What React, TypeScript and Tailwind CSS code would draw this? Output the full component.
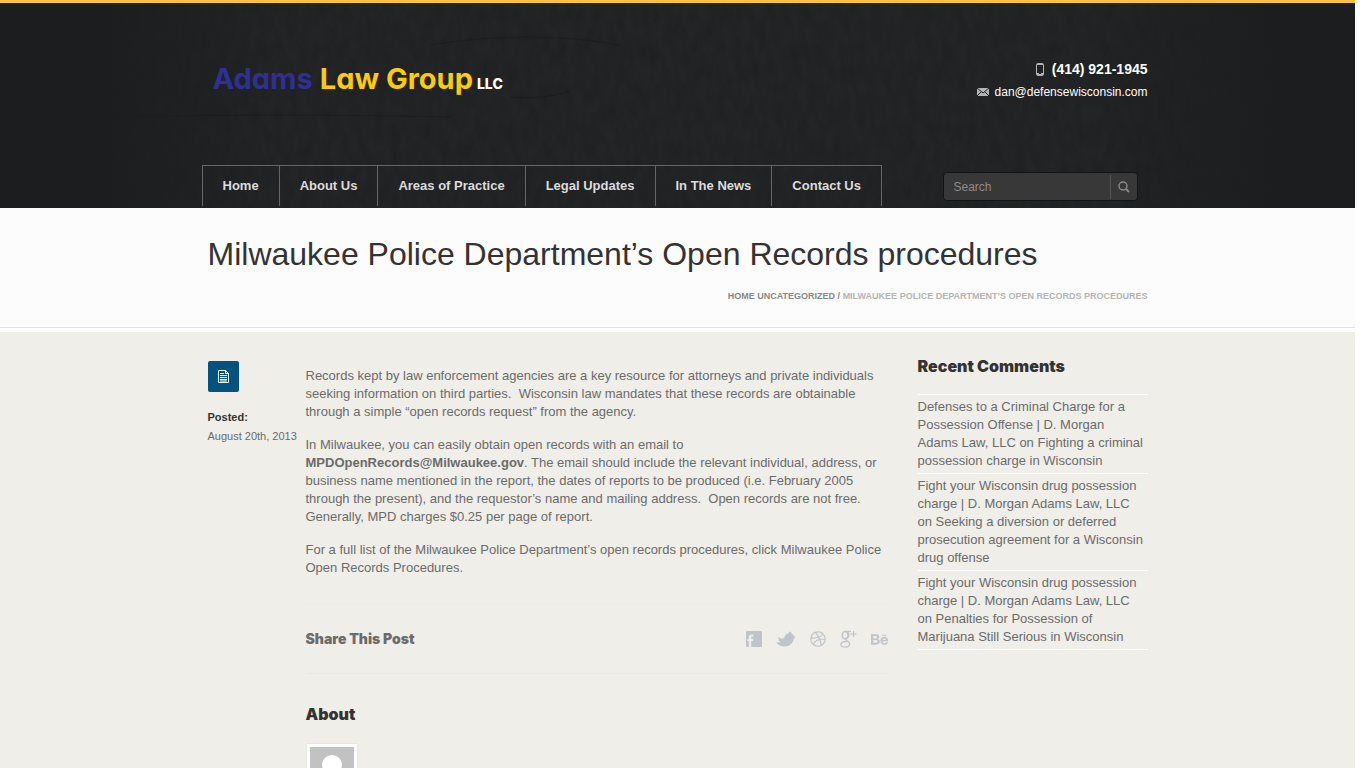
import React from "react";
import { FaBehance, FaDribbble } from "react-icons/fa";

const navItems = ["Home", "About Us", "Areas of Practice", "Legal Updates", "In The News", "Contact Us"];

const comments = [
  ["Defenses to a Criminal Charge for a Possession Offense | D. Morgan Adams Law, LLC", "Fighting a criminal possession charge in Wisconsin"],
  ["Fight your Wisconsin drug possession charge | D. Morgan Adams Law, LLC", "Seeking a diversion or deferred prosecution agreement for a Wisconsin drug offense"],
  ["Fight your Wisconsin drug possession charge | D. Morgan Adams Law, LLC", "Penalties for Possession of Marijuana Still Serious in Wisconsin"],
];

function HeaderTexture() {
  return (
    <svg className="absolute inset-0 h-full w-full" aria-hidden="true">
      <defs>
        <filter id="grain" x="0" y="0" width="100%" height="100%">
          <feTurbulence type="fractalNoise" baseFrequency="0.12 0.05" numOctaves="4" seed="7" />
          <feColorMatrix values="0 0 0 0 0  0 0 0 0 0  0 0 0 0 0  0.9 0 0 0 -0.3" />
        </filter>
        <linearGradient id="edges">
          <stop offset="0.07" stopColor="#1c1d1e" />
          <stop offset="0.2" stopColor="#1c1d1e" stopOpacity="0" />
          <stop offset="0.8" stopColor="#1c1d1e" stopOpacity="0" />
          <stop offset="0.95" stopColor="#1c1d1e" />
        </linearGradient>
      </defs>
      <rect width="100%" height="100%" filter="url(#grain)" opacity="0.2" />
      <g fill="none" stroke="#151617" opacity="0.45">
        <path d="M430 42Q530 26 620 42" />
        <path d="M110 114Q280 110 450 114" />
        <path d="M510 94Q545 97 570 88" />
      </g>
      <rect width="100%" height="100%" fill="url(#edges)" />
    </svg>
  );
}

function FacebookIcon() {
  return (
    <svg width="16" height="16" viewBox="0 0 16 16" aria-hidden="true">
      <path fill="currentColor" fillRule="evenodd" d="M1 0h14a1 1 0 0 1 1 1v14a1 1 0 0 1-1 1H5.200V10H7l.3-2.100H5.200V6.700c0-.9.400-1.200 1.200-1.200h1V3.500H5.700C3.700 3.500 2.800 4.700 2.800 6.400v1.500H1.300V10h1.500v6H1a1 1 0 0 1-1-1V1a1 1 0 0 1 1-1z" />
    </svg>
  );
}

function TwitterIcon() {
  return (
    <svg width="20" height="16" viewBox="0 0 20 16" aria-hidden="true">
      <path fill="currentColor" d="M0 11.200c2 .5 3.700.3 4.900-.6-1.400-.1-2.300-.9-2.700-2 .4.100.8.100 1.200 0C2.500 8 2 7.200 2 6c2.500 1.700 4.700 2 6.300 1C8.300 4.700 10 3.700 11.500 2.800 12.800 2 13.400 1.300 13.800.3c.5.500.6 1 .5 1.500L15.600.9c0 .7-.2 1.200-.6 1.700 1.500.3 2.500 1.200 2.900 2.500l1.900.6-1.700.9 1.200.7-1.600.3c-.4 4.600-4.200 8-9.200 8-3.400 0-6.600-1.600-8.500-4.400z" />
    </svg>
  );
}

function GooglePlusIcon() {
  return (
    <svg width="17" height="18" viewBox="0 0 17 18" fill="none" stroke="currentColor" aria-hidden="true">
      <ellipse cx="5.200" cy="5.200" rx="2.900" ry="3.700" strokeWidth="1.600" />
      <path strokeWidth="1.300" d="M5.500 1.300H11M7.600 1.700c1 .9 1.400 2 1.400 3.300 0 2.900-3.300 3-3.300 4.500 0 1.300 4 1.600 4 4.300 0 2.100-2 3.300-4.600 3.300-2.400 0-4.200-1-4.200-2.700 0-2 2.300-2.900 5.500-2.900" />
      <path d="M13.500 1v6M10.500 4h6" strokeWidth="1.200" />
    </svg>
  );
}

const social = [
  { name: "Facebook", icon: <FacebookIcon /> },
  { name: "Twitter", icon: <TwitterIcon /> },
  { name: "Dribbble", icon: <FaDribbble size={16} /> },
  { name: "Google Plus", icon: <GooglePlusIcon /> },
  { name: "Behance", icon: <FaBehance size={17} /> },
];

function Header() {
  return (
    <header className="relative border-t-[3px] border-[#fdc13b] bg-[#232425]">
      <HeaderTexture />
      <div className="relative mx-auto max-w-[940px]">
        <div className="flex h-[162px] items-start justify-between">
          <a href="#home" className="mt-14 flex items-baseline pl-[5px] font-['Inter',sans-serif] text-[29px] leading-10 font-bold [font-feature-settings:'cv11']">
            <span className="text-[#2e3192]">Adams</span>
            <span className="ml-[7px] text-[#ffcb05]">Law Group</span>
            <span className="ml-1 text-[14px] font-extrabold text-white">LLC</span>
          </a>
          <address className="mt-[55px] flex flex-col items-end text-white not-italic">
            <a href="tel:4149211945" className="flex items-center gap-2 text-[14px] leading-[22px] font-bold">
              <svg width="8" height="13" viewBox="0 0 8 13" aria-hidden="true">
                <rect x="0.5" y="0.5" width="7" height="12" rx="1.200" fill="none" stroke="#b5b5b5" />
                <path d="M1 1.500h6M1 10.500h2M5 10.500h2M1 11.500h6" stroke="#b5b5b5" />
              </svg>
              (414) 921-1945
            </a>
            <a href="mailto:dan@defensewisconsin.com" className="flex items-center gap-1.5 text-[12px] leading-6">
              <svg width="12" height="8" viewBox="0 0 12 8" aria-hidden="true">
                <rect width="12" height="8" fill="#b5b5b5" />
                <path d="M0 0l6 5 6-5M0 8l4-4M12 8L8 4" fill="none" stroke="#222" />
              </svg>
              dan@defensewisconsin.com
            </a>
          </address>
        </div>
        <div className="flex items-start justify-between pb-0.5">
          <nav className="-ml-1.5">
            <ul className="flex border-t border-r border-[#666]">
              {navItems.map((item) => (
                <li key={item} className="border-l border-[#666]">
                  <a href="#nav" className="block px-5 text-[13px] leading-10 font-bold text-[#dcdcdc]">{item}</a>
                </li>
              ))}
            </ul>
          </nav>
          <form role="search" className="mt-[7px] mr-2.5 flex w-[195px] items-center rounded-sm border border-[#141414] bg-[#383838]" onSubmit={(e) => e.preventDefault()}>
            <input type="search" aria-label="Search" placeholder="Search" className="h-[27px] min-w-0 flex-1 bg-transparent px-2.5 text-[12px] text-[#ccc] outline-none placeholder:text-[#8c8c8c]" />
            <button type="submit" aria-label="Submit search" className="flex h-6 w-[27px] items-center justify-center border-l border-[#555]">
              <svg width="12" height="12" viewBox="0 0 12 12" fill="none" stroke="#8c8c8c" aria-hidden="true">
                <circle cx="5" cy="5" r="4" strokeWidth="1.400" />
                <path d="M8 8l3 3" strokeWidth="2" />
              </svg>
            </button>
          </form>
        </div>
      </div>
    </header>
  );
}

export default function App() {
  return (
    <div className="min-h-screen bg-white pr-[11px] font-['Liberation_Sans',Arial,sans-serif] text-[13px] leading-[18px] text-[#6b6b6b]">
      <Header />
      <section className="border-b border-[#e2e2e2] bg-[#fcfcfc]">
        <div className="mx-auto flex max-w-[940px] flex-col pt-[26px] pb-[22px]">
          <h1 className="text-[32px] leading-10 text-[#333]">Milwaukee Police Department’s Open Records procedures</h1>
          <nav aria-label="Breadcrumb" className="mt-[13px] text-right text-[9px] leading-[18px] font-bold text-[#b5b5b5] uppercase">
            <span className="text-[#888]"><a href="#home">Home</a> <a href="#uncategorized">Uncategorized</a> / </span>
            Milwaukee Police Department’s Open Records procedures
          </nav>
        </div>
      </section>
      <main className="mt-1 min-h-[437px] overflow-hidden bg-[#efeee9]">
        <div className="mx-auto flex max-w-[940px] items-start">
          <aside className="w-[98px] shrink-0 pt-[29px]">
            <div className="flex size-[31px] items-center justify-center rounded-xs bg-[#04527f]">
              <svg width="11" height="13" viewBox="0 0 11 13" fill="none" stroke="#fff" aria-hidden="true">
                <path d="M.5.5h7l3 3v9H.5zM7.500.5v3h3M2 3.500h4M2 5.500h7M2 7.500h7M2 9.500h7M2 11h7" />
              </svg>
            </div>
            <p className="mt-4 text-[11px] font-bold text-[#333]">Posted:</p>
            <p className="mt-px text-[11px] whitespace-nowrap">August 20th, 2013</p>
          </aside>
          <article className="min-w-0 flex-1">
            <div className="flex flex-col gap-[15px] pt-[35px]">
              <p>Records kept by law enforcement agencies are a key resource for attorneys and private individuals seeking information on third parties.&nbsp; Wisconsin law mandates that these records are obtainable through a simple “open records request” from the agency.</p>
              <p>In Milwaukee, you can easily obtain open records with an email to <a href="mailto:MPDOpenRecords@Milwaukee.gov" className="font-bold">MPDOpenRecords@Milwaukee.gov</a>. The email should include the relevant individual, address, or business name mentioned in the report, the dates of reports to be produced (i.e. February 2005 through the present), and the requestor’s name and mailing address.&nbsp; Open records are not free.&nbsp; Generally, MPD charges $0.25 per page of report.</p>
              <p>For a full list of the Milwaukee Police Department’s open records procedures, click <a href="#procedures">Milwaukee Police Open Records Procedures.</a></p>
            </div>
            <div className="mt-[27px] flex h-[70px] items-center justify-between border-y border-t-[#edece7] border-b-[#e9e8e3]">
              <h2 className="font-['Inter',sans-serif] text-[14px] leading-[18px] font-black">Share This Post</h2>
              <ul className="flex items-center gap-3.5 text-[#bfc4c8]">
                {social.map((s) => (
                  <li key={s.name}><a href="#share" aria-label={s.name} className="flex h-[18px] items-center">{s.icon}</a></li>
                ))}
              </ul>
            </div>
            <h2 className="mt-[31px] font-['Inter',sans-serif] text-[16px] leading-[18px] font-black text-[#333]">About</h2>
            <svg width="52" height="52" viewBox="0 0 52 52" className="mt-5" aria-hidden="true">
              <rect x="0.5" y="0.5" width="51" height="51" fill="#fff" stroke="#e6e6e2" />
              <path fill="#c2c2c2" d="M4 4h44v44H4z" />
              <circle cx="26" cy="22" r="10" fill="#fff" />
              <path fill="#fff" d="M10 48c0-10 6-14 16-14s16 4 16 14z" />
            </svg>
          </article>
          <aside className="ml-[30px] w-[230px] shrink-0 pt-[25px]">
            <h2 className="font-['Inter',sans-serif] text-[16px] leading-[18px] font-black text-[#333]">Recent Comments</h2>
            <ul className="mt-[19px] border-t border-white">
              {comments.map(([author, post], i) => (
                <li key={i} className="border-b border-white py-[3px]">
                  <a href="#author">{author}</a> on <a href="#post">{post}</a>
                </li>
              ))}
            </ul>
          </aside>
        </div>
      </main>
    </div>
  );
}
